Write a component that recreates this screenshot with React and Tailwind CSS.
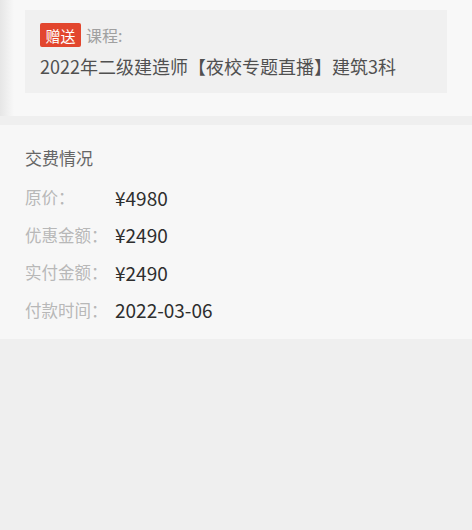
export default function App() {
  const font = { fontFamily: '"Noto Sans CJK SC", "Noto Sans", sans-serif' };
  const rows = [
    ["原价：", "¥4980"],
    ["优惠金额：", "¥2490"],
    ["实付金额：", "¥2490"],
    ["付款时间：", "2022-03-06"],
  ];
  return (
    <div className="min-h-[530px] w-full bg-[#efefef]" style={font}>
      <section className="relative bg-[#f8f8f8] px-[25px] pt-[10px] pb-[23px]">
        <div className="pointer-events-none absolute left-0 top-0 h-full w-[14px] bg-gradient-to-r from-[#e6e6e6] to-transparent" />
        <div className="bg-[#f0f0f0] px-[15px] pt-[13px] pb-[16px]">
          <div className="flex items-center">
            <span className="flex h-[24px] w-[41px] items-center justify-center rounded-[2px] bg-[#e2462e] text-[15px] leading-none text-white">
              赠送
            </span>
            <span className="ml-[5px] text-[16px] leading-[24px] text-[#a0a0a0]">课程:</span>
          </div>
          <div className="mt-[8px] text-[18px] leading-[22px] text-[#505050]">
            2022年二级建造师【夜校专题直播】建筑3科
          </div>
        </div>
      </section>
      <section className="mt-[9px] bg-[#f7f7f7] px-[25px] pt-[21px] pb-[10px]">
        <div className="text-[17px] leading-[24px] text-[#666666]">交费情况</div>
        <div className="mt-[9px]">
          {rows.map(([k, v]) => (
            <div key={k} className="flex h-[37.5px] items-center">
              <span className="w-[90px] whitespace-nowrap text-[16.5px] text-[#b8b8b8]">{k}</span>
              <span className="text-[19px] text-[#2e2e2e]">{v}</span>
            </div>
          ))}
        </div>
      </section>
    </div>
  );
}
